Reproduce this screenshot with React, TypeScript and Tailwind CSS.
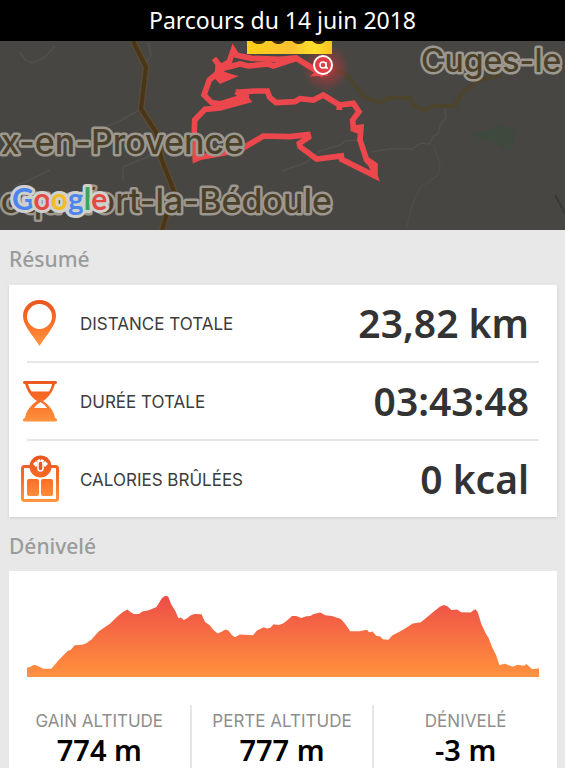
import type { ReactNode } from "react";

function RouteMap() {
  return (
    <svg
      viewBox="0 41 565 189"
      preserveAspectRatio="xMidYMid slice"
      className="block h-[189px] w-full bg-[#474642]"
      role="img"
      aria-label="Carte du parcours"
    >
      <defs>
        <radialGradient id="glow">
          <stop offset="0" stopColor="#ff3038" stopOpacity="0.8" />
          <stop offset="0.45" stopColor="#f03038" stopOpacity="0.35" />
          <stop offset="1" stopColor="#f03038" stopOpacity="0" />
        </radialGradient>
        <linearGradient id="flag" x1="0" y1="0" x2="1" y2="0">
          <stop offset="0" stopColor="#fdd018" />
          <stop offset="0.5" stopColor="#fbc130" />
          <stop offset="0.8" stopColor="#ffe02a" />
          <stop offset="1" stopColor="#fbc322" />
        </linearGradient>
      </defs>

      <g fill="none" stroke="#50504d" strokeWidth="1.5">
        <path d="M20 52 L25 60 33 63 45 57 55 46" />
        <path d="M141 109 L118 122 90 132" />
        <path d="M50 170 L25 182 14 186" />
        <path d="M148 42 L151 55 147 62" />
        <path d="M123 180 V167 L145 158 163 150" />
        <path d="M282 171 L305 163 320 151 340 145 345 141 360 140" />
        <path d="M370 152 L390 149 412 149 421 143 429 144 434 136 438 134 440 125 446 118 445 108" />
        <path d="M434 145 L440 165 438 175 420 188 412 205 406 230" stroke="#4c4c49" />
      </g>
      <path d="M473 134 L490 130 500 125 513 129 514 145 508 151 497 143 477 138Z" fill="#3e4a3e" />
      <path d="M555 195 L565 213" stroke="#393936" strokeWidth="2" />

      <path d="M133 41 L146 67 141 109 156 132 161 158 174 191 162 230" fill="none" stroke="#5b4a32" strokeWidth="7" />
      <path d="M133 41 L146 67 141 109 156 132 161 158 174 191 162 230" fill="none" stroke="#493517" strokeWidth="4" />
      <path
        d="M334 70 L347 75 364 97 381 103 388 98 410 98 413 105 425 111 432 106 455 106 461 94 479 80 500 75"
        fill="none"
        stroke="#4d442e"
        strokeWidth="4"
      />

      <circle cx="326" cy="68" r="24" fill="url(#glow)" />
      <g
        transform="translate(180 30) scale(0.3333)"
        fill="none"
        stroke="#ec474c"
        strokeWidth="17"
        strokeLinejoin="miter"
      >
        <path d="M430 135 L348 84 300 88 215 85 170 76 160 60 148 95 132 105" />
        <path d="M348 86 L280 108 265 102 205 108 180 102 130 115" />
        <path d="M102 85 L122 112 112 130 150 140 122 152 106 135 88 150 72 195 95 218 125 222 170 210 200 208 182 186 225 183 262 183 269 202 288 218 345 215 360 206 400 210 430 195 478 225 520 220 537 245 518 270 520 295 543 292 540 330 560 390 574 405 585 438 485 388 484 378 410 387 360 350 358 340 386 322 384 314 330 320 250 318 190 354 130 370 60 382 46 388 42 330 44 270 75 238 120 234 200 212 168 184" />
        <path d="M520 298 L545 305 M556 385 L585 405 L585 445 M120 222 L205 196 M478 225 V240" />
        <path d="M110 98 L140 104 128 125 148 136 125 150 106 140Z" fill="#ec474c" strokeWidth="6" />
        <path d="M180 190 L206 196 200 216 160 214Z" fill="#ec474c" strokeWidth="4" />
        <path d="M395 137 L415 120 440 135Z" fill="#ec474c" strokeWidth="4" />
      </g>

      <rect x="247" y="41" width="85" height="13" fill="url(#flag)" />
      <text x="289" y="44" textAnchor="middle" fill="#3a2c0a" className="font-['Inter'] text-[30px] font-bold">
        5000
      </text>

      <circle cx="323" cy="65" r="9" fill="#df3e45" stroke="#fff" strokeWidth="2" />
      <circle cx="323" cy="65" r="3" fill="none" stroke="#fff" strokeWidth="1.5" />
      <path d="M326 62 V68 H328" fill="none" stroke="#fff" strokeWidth="1.5" />

      <g
        fill="#4b412b"
        stroke="#9c9890"
        strokeWidth="5"
        strokeLinejoin="round"
        className="font-['Inter'] text-[34px] font-medium [paint-order:stroke]"
      >
        <text x="244" y="154" textAnchor="end">x-en-Provence</text>
        <text x="421" y="72" className="text-[32px]">Cuges-le</text>
        <text x="332" y="213" textAnchor="end">oquefort-la-Bédoule</text>
      </g>

      <text
        x="12"
        y="210"
        stroke="#d0d0ce"
        strokeWidth="6"
        strokeLinejoin="round"
        className="font-['Lato'] text-[30px] font-bold [paint-order:stroke]"
      >
        <tspan fill="#4b85ed">G</tspan>
        <tspan fill="#e34a41">o</tspan>
        <tspan fill="#f4bb26">o</tspan>
        <tspan fill="#4b85ed">g</tspan>
        <tspan fill="#3ba45b">l</tspan>
        <tspan fill="#e34a41">e</tspan>
      </text>
    </svg>
  );
}

function OrangeGradient({ id }: { id: string }) {
  return (
    <linearGradient id={id} gradientUnits="userSpaceOnUse" x1="0" y1="0" x2="0" y2="46">
      <stop offset="0" stopColor="#e85420" />
      <stop offset="0.5" stopColor="#f96d24" />
      <stop offset="1" stopColor="#ff9540" />
    </linearGradient>
  );
}

function PinIcon() {
  return (
    <svg viewBox="0 0 38 48" className="h-12 w-[38px]" aria-hidden="true">
      <defs><OrangeGradient id="pin" /></defs>
      <path
        fill="url(#pin)"
        fillRule="evenodd"
        d="M18.500 1 C9 1 2 8 2 17 C2 26 10 34 18.500 47 C27 34 35 26 35 17 C35 8 28 1 18.500 1Z M18.500 5 A12.500 12.500 0 1 1 18.500 30 A12.500 12.500 0 1 1 18.500 5Z"
      />
    </svg>
  );
}

function HourglassIcon() {
  return (
    <svg viewBox="0 0 38 48" className="h-12 w-[38px]" aria-hidden="true">
      <defs><OrangeGradient id="glass" /></defs>
      <path
        fill="url(#glass)"
        fillRule="evenodd"
        d="M3 4 H35 Q36 4 36 5.500 Q36 7 34 7 C32 14 28 20 22 24 C28 28 33 34 34 41 Q36 41 36 43 Q36 44.500 35 44.500 H3 Q2 44.500 2 43 Q2 41 4 41 C5 34 10 28 16 24 C10 20 6 14 4 7 Q2 7 2 5.500 Q2 4 3 4Z M7 7 Q8 11 10.500 14.500 H28 Q30.500 11 31 7Z M13 31 H26 Q23 27 19.500 25 Q15 28 13 31Z"
      />
    </svg>
  );
}

function ScaleIcon() {
  return (
    <svg viewBox="0 0 38 48" className="h-12 w-[38px]" aria-hidden="true">
      <defs><OrangeGradient id="scale" /></defs>
      <rect x="1.500" y="11.500" width="35" height="34" rx="2" fill="none" stroke="url(#scale)" strokeWidth="3" />
      <rect x="6" y="24" width="12" height="17" rx="2" fill="url(#scale)" />
      <rect x="20" y="24" width="12" height="17" rx="2" fill="url(#scale)" />
      <circle cx="19.500" cy="11.500" r="11" fill="url(#scale)" />
      <path d="M12 9 Q19.500 -0.500 27 9 L24 12 Q22 9 19.500 9 Q17 9 15 12Z" fill="#fff" />
      <path d="M15 5 L17 8 M19.500 3 V7 M24 5 L22 8" stroke="#f2642a" strokeWidth="1" />
      <rect x="17" y="6" width="5" height="10" rx="2.500" fill="#e9571f" stroke="#fff" strokeWidth="1.500" />
    </svg>
  );
}

function SummaryRow({ icon, label, value }: { icon: ReactNode; label: string; value: string }) {
  return (
    <div className="flex h-[76px] items-center pr-4">
      {icon}
      <dt className="ml-[21px] grow pt-1 font-['Inter'] text-[17px] text-[#3c3c3c]">{label}</dt>
      <dd className="text-[39px] leading-[54px] font-semibold text-[#333]">{value}</dd>
    </div>
  );
}

function Divider() {
  return <hr className="mx-1.5 h-0.5 border-0 bg-[#e6e6e6]" />;
}

function ElevationChart() {
  return (
    <svg
      viewBox="79 104 1538 247"
      preserveAspectRatio="none"
      className="block h-[82px] w-full"
      role="img"
      aria-label="Profil du dénivelé"
    >
      <defs>
        <linearGradient id="elevation" x1="0" y1="0" x2="0" y2="1">
          <stop offset="0" stopColor="#ed4d48" />
          <stop offset="0.9" stopColor="#ff8b3e" />
          <stop offset="1" stopColor="#fa9146" />
        </linearGradient>
      </defs>
      <path
        fill="url(#elevation)"
        d="M79 351 V323 L90 320 100 314 110 317 128 326 152 326 175 299 202 272 210 270 222 255 245 254 257 249 272 239 295 213 330 189 347 172 365 157 380 148 392 157 400 161 415 161 425 154 445 150 468 140 484 114 492 108 499 106 504 111 512 132 525 153 534 175 540 172 545 175 550 179 560 174 570 166 582 161 603 162 614 185 628 195 640 210 652 220 665 214 675 208 684 211 695 225 704 231 718 223 758 225 770 211 790 201 800 205 810 203 820 192 835 194 848 190 862 179 875 167 888 167 903 173 918 168 930 167 940 161 960 157 975 165 995 167 1022 176 1035 191 1050 213 1078 213 1100 209 1107 216 1117 214 1128 227 1140 229 1148 237 1165 239 1175 227 1210 208 1238 190 1262 186 1285 167 1303 152 1320 139 1332 134 1342 138 1354 149 1371 148 1383 156 1412 157 1420 150 1426 147 1433 156 1444 192 1456 218 1466 234 1477 263 1488 285 1498 315 1515 311 1538 320 1552 314 1572 317 1579 312 1597 328 1617 325 V351Z"
      />
    </svg>
  );
}

function Stat({ label, value }: { label: string; value: string }) {
  return (
    <div className="flex flex-col items-center border-r-2 border-[#e6e6e6] pt-1 pb-0.5 last:border-r-0">
      <dt className="font-['Inter'] text-[17px] leading-6 text-[#8e8e8e]">{label}</dt>
      <dd className="text-[29px] leading-[34px] font-semibold text-black">{value}</dd>
    </div>
  );
}

function SectionTitle({ children }: { children: ReactNode }) {
  return <h2 className="pt-3.5 pb-2.5 text-[21px] leading-[30px] font-medium text-[#9b9b9b]">{children}</h2>;
}

export default function App() {
  return (
    <div className="min-h-screen bg-[#e8e8e8] font-['Noto_Sans','Open_Sans',sans-serif]">
      <header className="flex h-[41px] items-center justify-center bg-black">
        <h1 className="text-[23px] text-white">Parcours du 14 juin 2018</h1>
      </header>
      <RouteMap />
      <main className="px-2 pl-[9px]">
        <section>
          <SectionTitle>Résumé</SectionTitle>
          <dl className="border-t border-[#e8e8e8] bg-white px-3 shadow-sm">
            <SummaryRow icon={<PinIcon />} label="DISTANCE TOTALE" value="23,82 km" />
            <Divider />
            <SummaryRow icon={<HourglassIcon />} label="DURÉE TOTALE" value="03:43:48" />
            <Divider />
            <SummaryRow icon={<ScaleIcon />} label="CALORIES BRÛLÉES" value="0 kcal" />
          </dl>
        </section>
        <section>
          <SectionTitle>Dénivelé</SectionTitle>
          <div className="bg-white pt-6">
            <div className="px-[18px]">
              <ElevationChart />
            </div>
            <dl className="mt-7 grid grid-cols-3">
              <Stat label="GAIN ALTITUDE" value="774 m" />
              <Stat label="PERTE ALTITUDE" value="777 m" />
              <Stat label="DÉNIVELÉ" value="-3 m" />
            </dl>
          </div>
        </section>
      </main>
    </div>
  );
}
